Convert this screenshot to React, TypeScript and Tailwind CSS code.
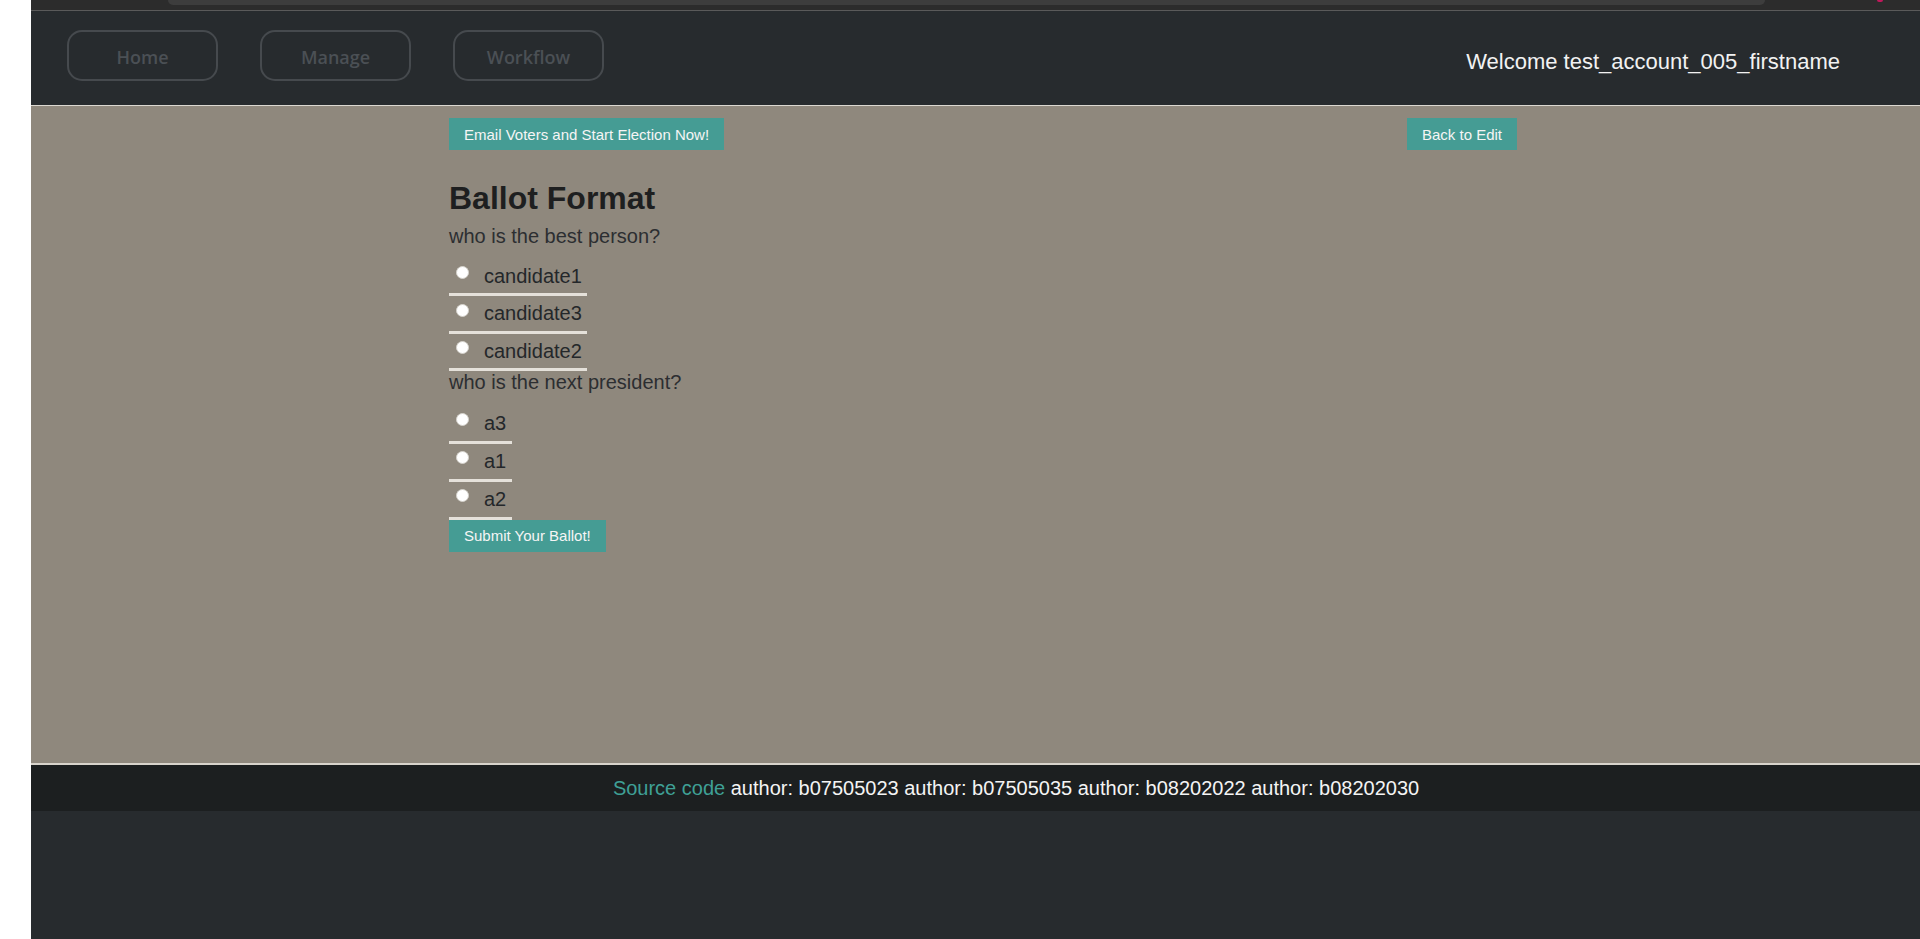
import type { ReactNode } from "react";

type Question = {
  title: string;
  options: string[];
  rowWidth: string;
  rowHeight: string;
};

const questions: Question[] = [
  {
    title: "who is the best person?",
    options: ["candidate1", "candidate3", "candidate2"],
    rowWidth: "w-[138px]",
    rowHeight: "h-[37.5px]",
  },
  {
    title: "who is the next president?",
    options: ["a3", "a1", "a2"],
    rowWidth: "w-[63px]",
    rowHeight: "h-[38px]",
  },
];

const navItems = ["Home", "Manage", "Workflow"];
const authors = ["b07505023", "b07505035", "b08202022", "b08202030"];

const TealButton = ({ children }: { children: ReactNode }) => (
  <button className="h-[32px] px-[15px] bg-[#459c94] text-[#f5f5f5] text-[15px] leading-[17px] flex items-center whitespace-nowrap">
    {children}
  </button>
);

export default function App() {
  return (
    <div className="flex min-h-[939px] bg-white font-['Liberation_Sans',Arial,sans-serif]">
      {/* white gutter on the left */}
      <div className="w-[31px] shrink-0 bg-white" />

      <div className="flex-1 flex flex-col bg-[#272b2e]">
        {/* cropped browser strip */}
        <div className="h-[11px] shrink-0 bg-[#2c2c2c] border-b border-[#5a5a5a] flex items-start">
          <div className="ml-[137px] w-[1597px] h-[5px] bg-[#3d3d3d] rounded-b-[8px]" />
          <div className="ml-[112px] w-[6px] h-[2px] bg-[#c2185b] rounded-b-full" />
        </div>

        {/* navbar */}
        <nav className="h-[95px] shrink-0 flex items-start justify-between border-b border-[#dcd8d1] pl-[36px] pr-[80px]">
          <div className="flex gap-[42px] pt-[19px]">
            {navItems.map((item) => (
              <div
                key={item}
                className="w-[151px] h-[51px] pt-[3px] border-2 border-[#464a4e] rounded-[15px] flex items-center justify-center text-[#4b5055] text-[18px] font-semibold font-['Open_Sans',sans-serif]"
              >
                {item}
              </div>
            ))}
          </div>
          <div className="pt-[38px] text-[22px] leading-[25px] text-[#f2f2f2]">
            Welcome test_account_005_firstname
          </div>
        </nav>

        {/* main content */}
        <main className="h-[657px] shrink-0 bg-[#8f887d] pt-[12px] pl-[418px]">
          <div className="w-[1068px] flex justify-between">
            <TealButton>Email Voters and Start Election Now!</TealButton>
            <TealButton>Back to Edit</TealButton>
          </div>

          <h2 className="mt-[29.5px] text-[32px] leading-[37px] font-bold text-[#1e1f20]">
            Ballot Format
          </h2>

          <div className="mt-[8px]">
            {questions.map((q, qi) => (
              <div key={q.title}>
                <div className="text-[20px] leading-[23px] text-[#2c2e31]">{q.title}</div>
                <div className={qi === 0 ? "mt-[11px]" : "mt-[11.5px]"}>
                  {q.options.map((opt) => (
                    <label
                      key={opt}
                      className={`flex items-start ${q.rowWidth} ${q.rowHeight} border-b-[3px] border-[#e5e1da]`}
                    >
                      <input
                        type="radio"
                        name={`q${qi}`}
                        className="appearance-none mt-[7.5px] ml-[7px] w-[13px] h-[13px] rounded-full bg-white border border-[#d6d3cd] shrink-0"
                      />
                      <span className="ml-[15px] mt-[6px] text-[20px] leading-[23px] text-[#24272a]">
                        {opt}
                      </span>
                    </label>
                  ))}
                </div>
              </div>
            ))}
          </div>

          <div className="flex">
            <TealButton>Submit Your Ballot!</TealButton>
          </div>
        </main>

        {/* footer */}
        <footer className="h-[48px] shrink-0 bg-[#1c1f20] border-t-2 border-[#d8d4cc] pt-[11.5px] pl-[81px] text-center text-[20px] leading-[23px] text-[#f4f4f4]">
          <span className="text-[#3fa096]">Source code</span>{" "}
          {authors.map((a) => `author: ${a}`).join(" ")}
        </footer>

        <div className="flex-1 bg-[#272b2e]" />
      </div>
    </div>
  );
}
